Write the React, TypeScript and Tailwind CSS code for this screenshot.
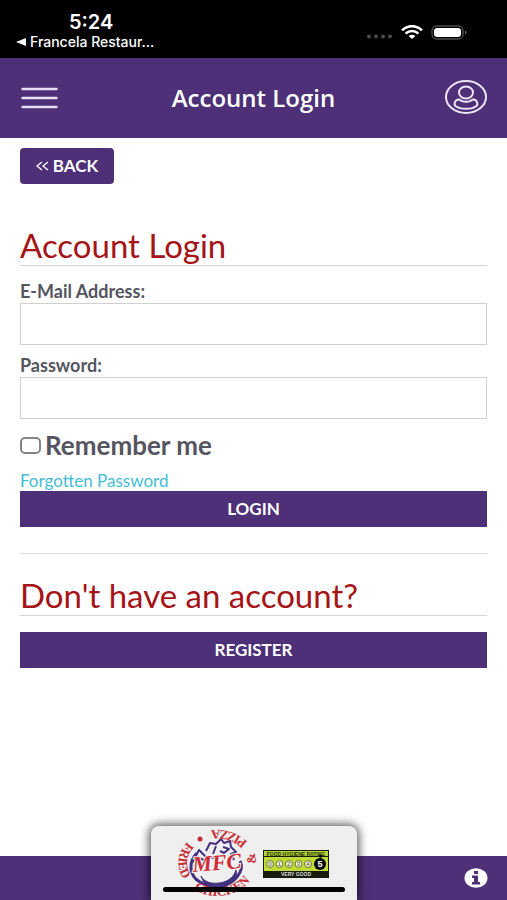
import { useState } from "react";
import type { ReactNode } from "react";

function StatusBar() {
  return (
    <div className="flex h-[58px] items-start justify-between bg-black pl-4 pr-10 pt-[10px] text-white">
      <div className="flex flex-col items-center font-['Inter',sans-serif]">
        <span className="pl-3 text-[20px] font-semibold leading-6">5:24</span>
        <a href="#restaurant" className="flex items-center gap-1 text-[14px] font-medium leading-4">
          <svg width="10" height="8" viewBox="0 0 10 8" fill="currentColor" aria-hidden="true">
            <path d="M0 4 10 0v8z" />
          </svg>
          Francela Restaur…
        </a>
      </div>
      <div className="flex items-center gap-2 pt-[14px]">
        <svg width="27" height="16" viewBox="0 0 27 16" fill="#4a4a4a" aria-hidden="true">
          <circle cx="3" cy="12.500" r="2" />
          <circle cx="10" cy="12.500" r="2" />
          <circle cx="17" cy="12.500" r="2" />
          <circle cx="24" cy="12.500" r="2" />
        </svg>
        <svg width="22" height="14" viewBox="0 0 22 14" fill="none" stroke="#fff" strokeWidth="2.600" aria-label="Wi-Fi">
          <path d="M1 5.200C7-.2 15-.2 21 5.200" />
          <path d="M4.600 8.500c3.900-3.200 8.900-3.200 12.800 0" />
          <path d="M7.600 11q3.400-2.400 6.800 0L11 14z" fill="#fff" stroke="none" />
        </svg>
        <svg width="36" height="15" viewBox="0 0 36 15" fill="none" aria-label="Battery">
          <rect x="1" y="1" width="31" height="13" rx="4.500" stroke="#707070" />
          <rect x="3" y="3" width="27" height="9" rx="3" fill="#fff" />
          <path d="M34 5.500q3 2 0 4z" fill="#707070" />
        </svg>
      </div>
    </div>
  );
}

function Header() {
  return (
    <header className="flex h-20 items-center justify-between bg-[#4d3077] px-5 text-white">
      <button type="button" aria-label="Menu" className="flex h-10 w-[42px] items-center">
        <svg width="40" height="24" viewBox="0 0 40 24" stroke="#e9def5" strokeWidth="2.400" strokeLinecap="round">
          <path d="M2.500 3h34M2.500 12h34M2.500 21h34" />
        </svg>
      </button>
      <span className="font-['Open_Sans',sans-serif] text-[24px] font-semibold leading-8">Account Login</span>
      <button type="button" aria-label="My account">
        <svg width="42" height="36" viewBox="0 0 42 36" fill="none" stroke="#eee4f8" strokeWidth="2">
          <ellipse cx="21" cy="17" rx="20" ry="16" />
          <ellipse cx="21" cy="12.500" rx="7" ry="6" />
          <path d="M13 19.500C9.800 20.500 8.600 24 10.500 26c4.500 3.700 16.500 3.700 21 0 1.900-2 .7-5.500-2.500-6.500-1.600-.4-2 .6-3.500 1.300q-4.500 2-9 0c-1.500-.7-1.900-1.700-3.500-1.300z" />
        </svg>
      </button>
    </header>
  );
}

function SectionTitle({ children }: { children: ReactNode }) {
  return (
    <h2 className="h-10 border-b border-[#d5d5d5] text-[33px] leading-[38px] text-[#a51417]">{children}</h2>
  );
}

function Field({ id, label, type }: { id: string; label: string; type: string }) {
  return (
    <div className="flex flex-col">
      <label htmlFor={id} className="text-[18px] font-bold leading-6">
        {label}
      </label>
      <input id={id} type={type} className="h-[42px] w-full border border-[#d0d0d0] bg-white px-3 text-base outline-none" />
    </div>
  );
}

function MfcLogo() {
  return (
    <svg width="84" height="74" viewBox="0 0 84 74" aria-label="MFC Fried Chicken and Pizza">
      {/* runs counter-clockwise so the letters stand with their feet outwards */}
      <path
        id="ring"
        d="M17 12A39 33 0 0 0 42 70A39 33 0 0 0 81 37A39 33 0 0 0 42 4A39 33 0 0 0 17 12"
        fill="none"
      />
      <g fill="none" stroke="#43307f" strokeLinejoin="round">
        {/* body */}
        <path d="M22 27c-9 9-8 23 3 29 12 7 29 5 37-5 5-6 5-12 3-16" strokeWidth="3" />
        <path d="M26 50c3 6 10 8 18 7 9-1 15-6 17-13 2 8-4 15-15 18-9 2-17-2-20-12z" fill="#43307f" strokeWidth="1" />
        {/* wing */}
        <path d="M17 37l7-13 7 7 12 1M21 31l11 4" strokeWidth="2" />
        {/* head and comb */}
        <path d="M31 25l4-8 6 1 5-5 3 4 6-2 1 6 5 5-5 2 3 6M41 20l-3 8M48 21l6 2-5 4-4-2" strokeWidth="2" />
      </g>
      <circle cx="25" cy="13" r="2.500" fill="#c92b35" />
      <g fill="#c92b35" fontFamily="Liberation Serif, serif" fontSize="13" fontWeight="700">
        <text><textPath href="#ring" startOffset="6">FRIED</textPath></text>
        <text><textPath href="#ring" startOffset="61">CHICKEN</textPath></text>
        <text><textPath href="#ring" startOffset="142">&amp;</textPath></text>
        <text><textPath href="#ring" startOffset="165">PIZZA</textPath></text>
      </g>
      <text
        x="42"
        y="44"
        textAnchor="middle"
        fill="#cf2935"
        stroke="#efefef"
        strokeWidth="2"
        paintOrder="stroke"
        fontFamily="Liberation Serif, serif"
        fontSize="22"
        fontStyle="italic"
        fontWeight="700"
        transform="rotate(-5 42 40)"
      >
        MFC
      </text>
    </svg>
  );
}

function HygieneRating() {
  const scores = [0, 1, 2, 3, 4];
  return (
    <svg width="66" height="28" viewBox="0 0 66 28" fontFamily="Liberation Sans, sans-serif" aria-label="Food hygiene rating 5">
      <rect width="66" height="28" fill="#171a0c" />
      <rect x="1" y="1" width="64" height="5" fill="#b5d437" />
      <rect x="1" y="7" width="64" height="14" fill="#bedc35" />
      <text x="33" y="6" textAnchor="middle" fontSize="5" fontWeight="700" fill="#252c08">FOOD HYGIENE RATING</text>
      {scores.map((n) => (
        <g key={n}>
          <circle cx={7 + n * 9.500} cy="14" r="3.500" fill="#eef3d4" stroke="#687026" />
          <text x={7 + n * 9.500} y="16" textAnchor="middle" fontSize="6" fill="#454b20">{n}</text>
        </g>
      ))}
      <path d="M55 5h5l-2.500 4z" fill="#111" />
      <circle cx="57" cy="14" r="6" fill="#080808" />
      <text x="57" y="17" textAnchor="middle" fontSize="9" fontWeight="700" fill="#fff">5</text>
      <text x="33" y="26" textAnchor="middle" fontSize="5" fontWeight="700" fill="#ddd">VERY GOOD</text>
    </svg>
  );
}

function Footer() {
  return (
    <footer className="mt-auto grid h-11 grid-cols-[1fr_auto_1fr] items-end bg-[#4d3077]">
      <div />
      <div className="relative -mt-[30px] flex h-[74px] w-[206px] items-start rounded-t-lg bg-[#efefef] pl-6 shadow-[0_0_10px_2px_rgba(0,0,0,0.65)]">
        <MfcLogo />
        <div className="ml-1 mt-6">
          <HygieneRating />
        </div>
        {/* home indicator */}
        <div className="absolute inset-x-3 bottom-2 h-[5px] rounded-full bg-black" />
      </div>
      <button type="button" aria-label="Information" className="mb-3 mr-[19px] justify-self-end">
        <svg width="24" height="20" viewBox="0 0 24 20">
          <ellipse cx="12" cy="10" rx="11.500" ry="9.800" fill="#fff" />
          <path d="M10 3h4v3h-4zM8 7.500h6V14h2v2.500H8V14h2v-4H8z" fill="#4d3077" />
        </svg>
      </button>
    </footer>
  );
}

export default function App() {
  const [remember, setRemember] = useState(false);

  return (
    <div className="flex min-h-screen flex-col overflow-hidden bg-white font-['Lato',sans-serif] text-[#55555f]">
      <StatusBar />
      <Header />
      <main className="px-5 pb-16 pt-[10px]">
        <button
          type="button"
          className="flex h-9 w-[94px] items-center justify-center gap-1 rounded bg-[#4d3077] text-[17px] font-bold text-white"
        >
          <svg width="13" height="10" viewBox="0 0 13 10" fill="none" stroke="currentColor" strokeWidth="1.300" aria-hidden="true">
            <path d="M6 1 1 5l5 4M12 1 7 5l5 4" />
          </svg>
          BACK
        </button>

        <form className="mt-[42px]" onSubmit={(e) => e.preventDefault()}>
          <SectionTitle>Account Login</SectionTitle>
          <div className="mt-[13px] flex flex-col gap-2">
            <Field id="email" label="E-Mail Address:" type="email" />
            <Field id="password" label="Password:" type="password" />
          </div>
          <div className="mt-2 flex h-9 items-center gap-1">
            <input
              id="remember"
              type="checkbox"
              checked={remember}
              onChange={(e) => setRemember(e.target.checked)}
              className="h-[17px] w-[21px] appearance-none rounded-[5px] border-2 border-[#858585] bg-white checked:bg-[#4d3077]"
            />
            <label htmlFor="remember" className="text-[26px] font-bold leading-8">
              Remember me
            </label>
          </div>
          <a href="#forgotten" className="mt-2 block text-[17px] leading-5 text-[#45bdd5]">
            Forgotten Password
          </a>
          <button type="submit" className="h-9 w-full bg-[#4d3077] text-[17px] font-bold text-white">
            LOGIN
          </button>
        </form>

        <hr className="mt-[26px] border-[#dedede]" />

        <section className="mt-[22px]">
          <SectionTitle>Don't have an account?</SectionTitle>
          <button type="button" className="mt-4 h-9 w-full bg-[#4d3077] text-[17px] font-bold text-white">
            REGISTER
          </button>
        </section>
      </main>
      <Footer />
    </div>
  );
}
